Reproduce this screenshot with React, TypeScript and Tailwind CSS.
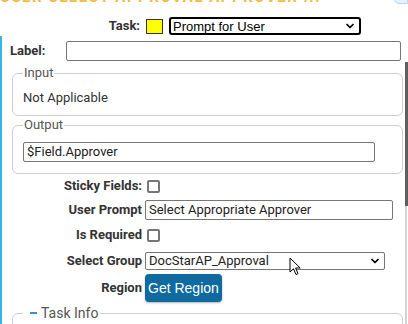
import { ChevronDown } from 'lucide-react'

const label = 'text-[13px] font-bold text-[#333] leading-[16px]'
const field = 'border border-[#767676] rounded-[2px] bg-white text-[13px] text-[#222] px-[3px] flex items-center'

function Legend({ children }: { children: React.ReactNode }) {
  return <legend className="px-[1px] text-[13px] leading-[16px] text-[#555]">{children}</legend>
}

function Checkbox() {
  return <div className="ml-[2px] w-[13px] h-[13px] border-2 border-[#767676] rounded-[2px] bg-white" />
}

function Row({ name, className, children }: { name: string; className: string; children: React.ReactNode }) {
  return (
    <div className={`grid grid-cols-[140px_1fr] items-center ${className}`}>
      <span className={`${label} text-right`}>{name}</span>
      <div className="flex items-center pl-[3px]">{children}</div>
    </div>
  )
}

export default function App() {
  return (
    <div className="relative w-[408px] h-[324px] overflow-hidden bg-white font-['Roboto',sans-serif]">
      {/* cut-off page heading */}
      <div className="h-[3px] overflow-hidden">
        <div className="-mt-[10px] text-[15px] leading-[15px] font-bold tracking-[1.5px] text-[#f5b945] whitespace-nowrap">
          USER SELECT APPROVAL APPROVER ...
        </div>
      </div>
      <div className="absolute right-0 top-[-8px] w-[14px] h-[12px] rounded-bl-[5px] border border-[#bcd6ee] bg-[#e6f0fb]" />

      {/* task type */}
      <div className="mt-[14px] flex items-center h-[18px]">
        <span className={`${label} w-[140px] text-right`}>Task:</span>
        <div className="ml-[6px] w-[17px] h-[15px] border border-[#333] bg-[#ffff00]" />
        <div className="ml-[6px] w-[192px] h-[18px] border-2 border-black rounded-[3px] flex items-center justify-between pl-[2px] pr-[3px]">
          <span className="font-['Liberation_Sans',sans-serif] text-[13px] text-black leading-none">Prompt for User</span>
          <ChevronDown size={12} strokeWidth={3.5} className="text-black" />
        </div>
      </div>

      <div className="mt-[1px] border-l-2 border-[#36b6e6]">
        <div className="pt-[4px] flex items-center h-[25px]">
          <span className={`${label} ml-[8px] w-[56px]`}>Label:</span>
          <div className="w-[335px] h-[20px] border border-[#767676] rounded-[2px]" />
        </div>

        <div className="mt-[1px] flex">
          <div className="flex-1 pl-[10px] pr-[1px] pt-[3px]">
            <fieldset className="border border-[#cfcfcf] rounded-[6px] px-[10px] pb-[9px]">
              <Legend>Input</Legend>
              <div className="pt-[9px] text-[13px] leading-[16px] text-[#333]">Not Applicable</div>
            </fieldset>

            <fieldset className="mt-[1px] border border-[#cfcfcf] rounded-[6px] px-[10px] pb-[11px]">
              <Legend>Output</Legend>
              <div className={`${field} mt-[9px] w-[352px] h-[20px]`}>$Field.Approver</div>
            </fieldset>

            <div className="-ml-[10px]">
              <Row name="Sticky Fields:" className="mt-[2px] h-[20px]">
                <Checkbox />
              </Row>
              <Row name="User Prompt" className="mt-[3px] h-[21px]">
                <div className={`${field} w-[248px] h-[20px]`}>Select Appropriate Approver</div>
              </Row>
              <Row name="Is Required" className="mt-[5px] h-[20px]">
                <Checkbox />
              </Row>
              <Row name="Select Group" className="mt-[6px] h-[19px]">
                <div className={`${field} w-[240px] h-[18px] justify-between`}>
                  <span>DocStarAP_Approval</span>
                  <ChevronDown size={12} strokeWidth={3.5} className="text-black" />
                </div>
              </Row>
              <Row name="Region" className="mt-[4px] h-[28px]">
                <button className="h-[28px] px-[3px] rounded-[4px] bg-[#0e6a9f] text-white text-[14px] font-['Liberation_Sans',sans-serif] shadow-[0_1px_2px_rgba(0,0,0,0.3)]">
                  Get Region
                </button>
              </Row>
            </div>

            <fieldset className="mt-[3px] h-[40px] border border-[#cfcfcf] rounded-[6px] px-[10px]">
              <legend className="pl-[7px] pr-[2px] text-[14px] leading-[16px] text-[#555] flex items-center">
                <span className="w-[7px] h-[2px] bg-[#3b8fd6] mr-[4px]" />
                Task Info
              </legend>
            </fieldset>
          </div>

          {/* scrollbar */}
          <div className="w-[4px] flex flex-col items-center">
            <div className="w-[3px] h-[144px] bg-[#5f5f5f]" />
            <div className="w-[2px] flex-1 bg-[#d4d4d4]" />
          </div>
        </div>
      </div>

      {/* mouse pointer */}
      <svg className="absolute left-[289px] top-[257px]" width="13" height="20" viewBox="0 0 13 20">
        <path d="M1 1 L1 15 L4.5 11.8 L7 17.5 L9 16.6 L6.6 11 L11.2 11 Z" fill="white" stroke="black" strokeWidth="1" strokeLinejoin="round" />
      </svg>
    </div>
  )
}
